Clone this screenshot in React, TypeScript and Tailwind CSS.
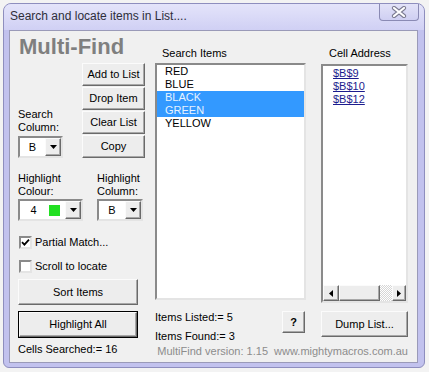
import type { ReactNode } from 'react'

const raised =
  'bg-[#ededed] border border-t-[#fbfbfb] border-l-[#fbfbfb] border-r-[#6a6a6a] border-b-[#6a6a6a] shadow-[inset_-1px_-1px_0_#a8a8a8]'
const sunken =
  'bg-white border-2 border-t-[#8a8a8a] border-l-[#8a8a8a] border-r-[#e4e4e4] border-b-[#e4e4e4]'

function Button({ label, className = '' }: { label: string; className?: string }) {
  return <div className={`flex items-center justify-center ${raised} ${className}`}>{label}</div>
}

function Arrow({ dir }: { dir: 'down' | 'left' | 'right' }) {
  const pts = dir === 'down' ? '0,0 7,0 3.5,4' : dir === 'left' ? '4,0 4,7 0,3.5' : '0,0 0,7 4,3.5'
  return (
    <svg width={dir === 'down' ? 7 : 4} height={dir === 'down' ? 4 : 7} viewBox={dir === 'down' ? '0 0 7 4' : '0 0 4 7'}>
      <polygon points={pts} fill="#000" />
    </svg>
  )
}

function Combo({ width, children }: { width: string; children: ReactNode }) {
  return (
    <div className={`flex h-[22px] ${width} ${sunken}`}>
      <div className="flex flex-1 items-center">{children}</div>
      <div className={`flex w-[16px] items-center justify-center ${raised}`}>
        <Arrow dir="down" />
      </div>
    </div>
  )
}

function Checkbox({ checked, label }: { checked: boolean; label: string }) {
  return (
    <div className="ml-[1px] flex h-[13px] items-center gap-[3px]">
      <div className={`flex h-[13px] w-[13px] items-center justify-center ${sunken}`}>
        {checked && (
          <svg width="9" height="9" viewBox="0 0 9 9">
            <path d="M1 4.2 L3.4 6.6 L8 1.6" stroke="#000" strokeWidth="1.8" fill="none" />
          </svg>
        )}
      </div>
      <span className="leading-[13px]">{label}</span>
    </div>
  )
}

export default function App() {
  const items = ['RED', 'BLUE', 'BLACK', 'GREEN', 'YELLOW']
  const selected = ['BLACK', 'GREEN']
  const cells = ['$B$9', '$B$10', '$B$12']

  return (
    <div className="h-[372px] w-[429px] bg-[#f3f3f3] pl-[3px] pt-[3px] font-['Liberation_Sans',Arial,sans-serif] text-[11px] text-black">
      <div className="flex h-[365px] w-[422px] flex-col rounded-t-[8px] rounded-b-[6px] border border-[#8e8ebe] bg-[#c2c2ee]">
        {/* Title bar */}
        <div className="flex h-[26px] items-start justify-between rounded-t-[7px] bg-[linear-gradient(180deg,#e4e4fa,#d0d0f4)]">
          <span className="pl-[6px] pt-[5px] text-[12px] leading-[15px] text-[#2e2e3a]">
            Search and locate items in List....
          </span>
          <div className="mr-[5px] flex h-[17px] w-[40px] items-center justify-center rounded-b-[4px] border border-t-0 border-[#8a8ab4] bg-[linear-gradient(180deg,#e2e2f8,#cfcff2)]">
            <svg width="16" height="12" viewBox="0 0 16 12">
              <path d="M3 2 L13 10 M13 2 L3 10" stroke="#7a7a90" strokeWidth="4.2" strokeLinecap="round" />
              <path d="M3 2 L13 10 M13 2 L3 10" stroke="#ffffff" strokeWidth="2.2" strokeLinecap="round" />
            </svg>
          </div>
        </div>

        {/* Client area */}
        <div className="ml-[5px] flex h-[333px] w-[409px] border border-[#9a9ab8] bg-[#f0f0f0] pl-[8px]">
          {/* Left column */}
          <div className="flex w-[128px] flex-col">
            <div className="mt-[4px] h-[24px] pl-[1px] text-[22px] font-bold leading-[24px] text-[#7f7f7f]">
              Multi-Find
            </div>

            <div className="mt-[4px] flex items-end">
              <div className="flex w-[64px] flex-col">
                <div className="mb-[2px] leading-[13px]">
                  Search
                  <br />
                  Column:
                </div>
                <Combo width="w-[45px]">
                  <span className="flex-1 text-center">B</span>
                </Combo>
              </div>
              <div className="flex w-[63px] flex-col gap-[1px]">
                <Button label="Add to List" className="h-[23px]" />
                <Button label="Drop Item" className="h-[23px]" />
                <Button label="Clear List" className="h-[23px]" />
                <Button label="Copy" className="h-[23px]" />
              </div>
            </div>

            <div className="mt-[14px] flex">
              <div className="flex w-[79px] flex-col">
                <div className="mb-[1px] leading-[13px]">
                  Highlight
                  <br />
                  Colour:
                </div>
                <Combo width="w-[65px]">
                  <span className="w-[27px] text-center">4</span>
                  <span className="ml-[2px] h-[11px] w-[11px] bg-[#22e022]" />
                </Combo>
              </div>
              <div className="flex flex-col">
                <div className="mb-[1px] leading-[13px]">
                  Highlight
                  <br />
                  Column:
                </div>
                <Combo width="w-[46px]">
                  <span className="flex-1 text-center">B</span>
                </Combo>
              </div>
            </div>

            <div className="mt-[15px]">
              <Checkbox checked label="Partial Match..." />
            </div>
            <div className="mt-[11px]">
              <Checkbox checked={false} label="Scroll to locate" />
            </div>

            <Button label="Sort Items" className="mt-[6px] h-[26px] w-[120px]" />
            <div className="mt-[6px] h-[27px] w-[120px] border border-black">
              <Button label="Highlight All" className="h-full w-full" />
            </div>
            <div className="mt-[5px] leading-[13px]">Cells Searched:= 16</div>
          </div>

          {/* Right area */}
          <div className="ml-[9px] flex w-[253px] flex-col">
            <div className="flex items-start">
              {/* Search items */}
              <div className="flex w-[152px] flex-col">
                <div className="mt-[16px] pl-[7px] leading-[13px]">Search Items</div>
                <div className={`mt-[3px] h-[237px] ${sunken}`}>
                  {items.map(item => (
                    <div
                      key={item}
                      className={`pl-[8px] leading-[13px] ${
                        selected.includes(item) ? 'bg-[#3399ff] text-[#e6f2ff]' : ''
                      }`}
                    >
                      {item}
                    </div>
                  ))}
                </div>
                <div className="mt-[11px] flex items-start">
                  <div className="flex flex-1 flex-col gap-[6px] pl-[-1px] leading-[13px]">
                    <span>Items Listed:= 5</span>
                    <span>Items Found:= 3</span>
                  </div>
                  <Button label="?" className="mr-[1px] h-[22px] w-[23px] font-bold" />
                </div>
              </div>

              {/* Cell address */}
              <div className="ml-[15px] flex w-[87px] flex-col">
                <div className="mt-[16px] pl-[8px] leading-[13px]">Cell Address</div>
                <div className={`mt-[4px] flex h-[239px] flex-col ${sunken}`}>
                  <div className="flex-1 pl-[10px] pt-[1px]">
                    {cells.map(c => (
                      <div key={c} className="leading-[13px] text-[#1c1c8e] underline">
                        {c}
                      </div>
                    ))}
                  </div>
                  <div className="flex h-[16px]">
                    <div className={`flex w-[16px] items-center justify-center ${raised}`}>
                      <Arrow dir="left" />
                    </div>
                    <div className={`w-[41px] ${raised}`} />
                    <div className="flex-1 bg-[image:repeating-conic-gradient(#ffffff_0_25%,#d6d6d6_0_50%)] bg-[length:2px_2px]" />
                    <div className={`flex w-[14px] items-center justify-center ${raised}`}>
                      <Arrow dir="right" />
                    </div>
                  </div>
                </div>
                <Button label="Dump List..." className="mt-[8px] h-[26px] w-[87px]" />
              </div>
            </div>
            <div className="mt-[2px] text-right leading-[13px] text-[#8c8c8c]">
              MultiFind version: 1.15&nbsp; www.mightymacros.com.au
            </div>
          </div>
        </div>
      </div>
    </div>
  )
}
